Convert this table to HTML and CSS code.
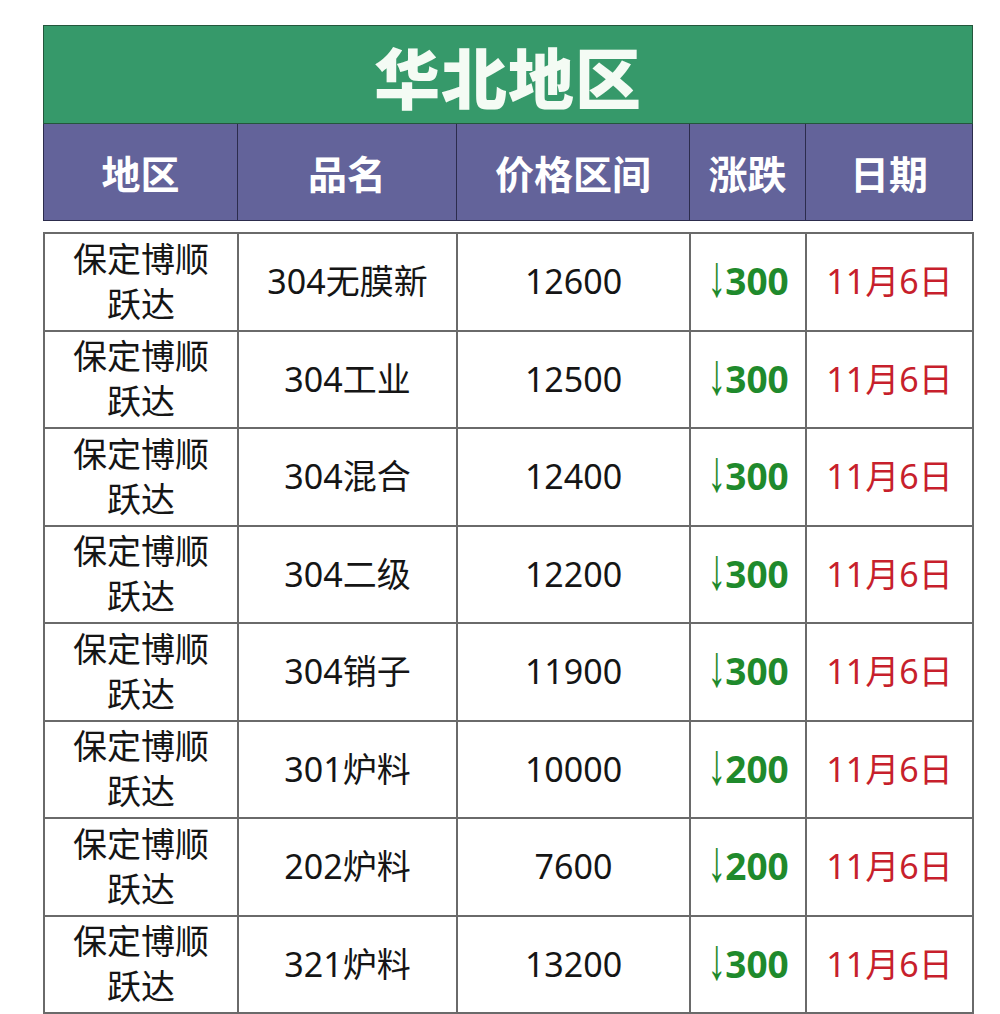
FILE: index.html
```html
<!DOCTYPE html>
<html lang="zh-CN">
<head>
<meta charset="utf-8">
<title>华北地区</title>
<link rel="stylesheet" href="styles.css">
</head>
<body>
<div class="page">
  <table class="head">
    <colgroup><col class="c1"><col class="c2"><col class="c3"><col class="c4"><col class="c5"></colgroup>
    <tr><th class="title" colspan="5">华北地区</th></tr>
    <tr class="cols"><th>地区</th><th>品名</th><th>价格区间</th><th>涨跌</th><th>日期</th></tr>
  </table>
  <table class="data">
    <colgroup><col class="c1"><col class="c2"><col class="c3"><col class="c4"><col class="c5"></colgroup>
    <tr><td class="region">保定博顺<br>跃达</td><td>304无膜新</td><td>12600</td><td class="chg"><span class="arrow">↓</span>300</td><td class="date">11月6日</td></tr>
    <tr><td class="region">保定博顺<br>跃达</td><td>304工业</td><td>12500</td><td class="chg"><span class="arrow">↓</span>300</td><td class="date">11月6日</td></tr>
    <tr><td class="region">保定博顺<br>跃达</td><td>304混合</td><td>12400</td><td class="chg"><span class="arrow">↓</span>300</td><td class="date">11月6日</td></tr>
    <tr><td class="region">保定博顺<br>跃达</td><td>304二级</td><td>12200</td><td class="chg"><span class="arrow">↓</span>300</td><td class="date">11月6日</td></tr>
    <tr><td class="region">保定博顺<br>跃达</td><td>304销子</td><td>11900</td><td class="chg"><span class="arrow">↓</span>300</td><td class="date">11月6日</td></tr>
    <tr><td class="region">保定博顺<br>跃达</td><td>301炉料</td><td>10000</td><td class="chg"><span class="arrow">↓</span>200</td><td class="date">11月6日</td></tr>
    <tr><td class="region">保定博顺<br>跃达</td><td>202炉料</td><td>7600</td><td class="chg"><span class="arrow">↓</span>200</td><td class="date">11月6日</td></tr>
    <tr><td class="region">保定博顺<br>跃达</td><td>321炉料</td><td>13200</td><td class="chg"><span class="arrow">↓</span>300</td><td class="date">11月6日</td></tr>
  </table>
</div>
</body>
</html>
```
FILE: styles.css
```css
html, body {
  margin: 0;
  padding: 0;
  background: #ffffff;
}
.page {
  padding: 25px 0 0 43px;
  font-family: "Noto Sans", "Noto Sans CJK SC", sans-serif;
}
table {
  border-collapse: collapse;
  table-layout: fixed;
  width: 929px;
}
.c1 { width: 194px; }
.c2 { width: 219px; }
.c3 { width: 233px; }
.c4 { width: 116px; }
.c5 { width: 167px; }

.head th {
  color: #ffffff;
  font-family: "Noto Sans CJK SC", sans-serif;
  text-align: center;
  padding: 0;
  border: 1px solid #2c2c4c;
}
.head .title {
  background: #36996a;
  height: 97px;
  font-size: 66px;
  font-weight: 900;
  letter-spacing: 1px;
  color: #f4fbf4;
  line-height: 1;
  border-color: #24563c;
}
.head .cols th {
  background: #63639a;
  height: 96px;
  font-size: 39px;
  font-weight: 700;
  line-height: 1;
}
.data {
  margin-top: 11px;
}
.data td {
  height: 95.5px;
  padding: 0;
  text-align: center;
  border: 2px solid #6a6a6a;
  font-size: 34px;
  color: #151515;
  line-height: 45px;
}
.data td.chg {
  color: #1f8a2c;
  font-weight: 700;
  font-size: 37px;
}
.data td.chg .arrow {
  display: inline-block;
  font-family: "Liberation Sans", sans-serif;
  font-weight: 400;
  font-size: 38px;
  margin-right: -1px;
  transform: scaleY(1.55);
  transform-origin: 50% 72%;
}
.data td.date {
  color: #c71f2c;
}
```
